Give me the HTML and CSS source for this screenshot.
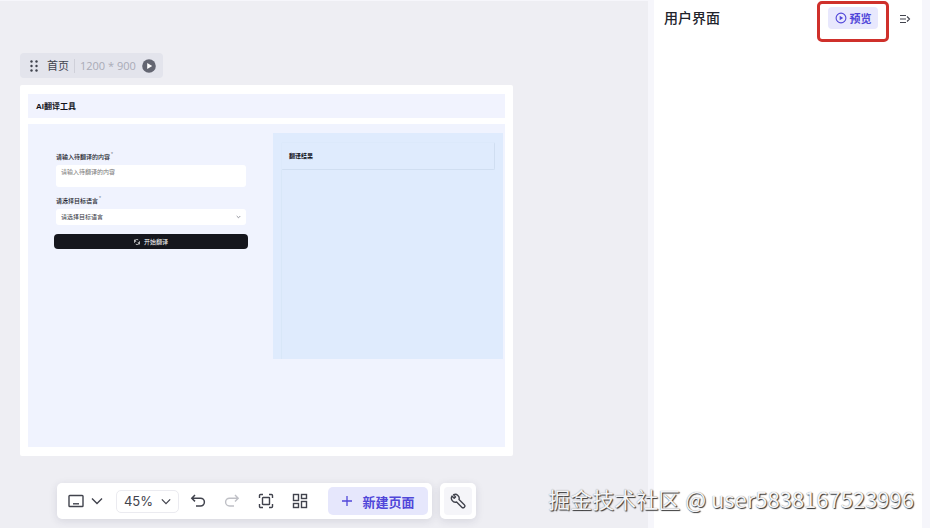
FILE: index.html
```html
<!DOCTYPE html>
<html lang="zh-CN">
<head>
    <meta charset="UTF-8">
    <meta name="viewport" content="width=device-width, initial-scale=1.0">
    <title>用户界面</title>
    <link rel="stylesheet" href="styles.css">
</head>
<body>
    <main class="canvas">
        <div class="page-tag">
            <svg class="drag" width="8" height="12" viewBox="0 0 8 12" fill="#41434d">
                <circle cx="1.5" cy="1.5" r="1.2"/><circle cx="6.5" cy="1.5" r="1.2"/>
                <circle cx="1.5" cy="6" r="1.2"/><circle cx="6.5" cy="6" r="1.2"/>
                <circle cx="1.5" cy="10.5" r="1.2"/><circle cx="6.5" cy="10.5" r="1.2"/>
            </svg>
            <span class="page-name">首页</span>
            <span class="page-size">1200 * 900</span>
            <button class="play" type="button" aria-label="播放">
                <svg width="14" height="14" viewBox="0 0 14 14"><circle cx="7" cy="7" r="6.8" fill="#646672"/><path d="M5.2 3.9v6.2L10.2 7z" fill="#fff"/></svg>
            </button>
        </div>

        <section class="board">
            <h1 class="board-title">AI翻译工具</h1>
            <div class="board-body">
                <form class="translate-form">
                    <label for="content">请输入待翻译的内容<sup>*</sup></label>
                    <textarea id="content" placeholder="请输入待翻译的内容"></textarea>
                    <label for="language">请选择目标语言<sup>*</sup></label>
                    <div class="select-box">
                        <select id="language">
                            <option>请选择目标语言</option>
                        </select>
                        <svg width="5" height="4" viewBox="0 0 5 4" fill="none" stroke="#777a85" stroke-width=".8"><path d="M.7 1l1.800 1.800L4.300 1"/></svg>
                    </div>
                    <button class="submit" type="button">
                        <svg width="6" height="6" viewBox="0 0 12 12" fill="none" stroke="#fff" stroke-width="1.400"><path d="M1 7.500A5 5 0 0 1 8.500 1.700M1.500 1v3.500h3M11 4.500A5 5 0 0 1 3.500 10.300M10.500 11V7.500h-3"/></svg>
                        开始翻译
                    </button>
                </form>
                <div class="result">
                    <h2 class="result-title">翻译结果</h2>
                    <div class="result-content"></div>
                </div>
            </div>
        </section>

        <div class="toolbar">
            <div class="tools">
                <button class="tool device" type="button" aria-label="设备">
                    <svg width="16" height="14" viewBox="0 0 16 14" fill="none" stroke="#41434d" stroke-width="1.4"><rect x="1" y="1.500" width="14" height="11" rx=".8"/><path d="M5 9.800h6"/></svg>
                    <svg width="12" height="8" viewBox="0 0 12 8" fill="none" stroke="#41434d" stroke-width="1.400"><path d="M1 1.500l5 5 5-5"/></svg>
                </button>
                <button class="zoom" type="button">
                    45%
                    <svg width="10" height="7" viewBox="0 0 12 8" fill="none" stroke="#41434d" stroke-width="1.500"><path d="M1 1.500l5 5 5-5"/></svg>
                </button>
                <button class="tool" type="button" aria-label="撤销">
                    <svg width="16" height="14" viewBox="0 0 16 14" fill="none" stroke="#41434d" stroke-width="1.500"><path d="M5 1L1.800 4.200 5 7.400M2 4.200h8.500a3.900 3.900 0 0 1 0 7.800H6"/></svg>
                </button>
                <button class="tool" type="button" aria-label="重做" disabled>
                    <svg width="16" height="14" viewBox="0 0 16 14" fill="none" stroke="#bfc0c6" stroke-width="1.400"><path d="M11 1l3.200 3.200L11 7.400M14 4.200H5.500a3.900 3.900 0 0 0 0 7.800H10"/></svg>
                </button>
                <button class="tool" type="button" aria-label="适应画布">
                    <svg width="16" height="16" viewBox="0 0 16 16" fill="none" stroke="#41434d" stroke-width="1.400"><path d="M1.500 5V2.500a1 1 0 0 1 1-1H5M11 1.500h2.500a1 1 0 0 1 1 1V5M14.500 11v2.500a1 1 0 0 1-1 1H11M5 14.500H2.500a1 1 0 0 1-1-1V11"/><rect x="4.500" y="4.500" width="7" height="7" rx=".6"/></svg>
                </button>
                <button class="tool" type="button" aria-label="布局">
                    <svg width="16" height="16" viewBox="0 0 16 16" fill="none" stroke="#41434d" stroke-width="1.400"><rect x="1.500" y="1.500" width="5" height="6"/><rect x="9.500" y="1.500" width="5" height="4"/><rect x="1.500" y="10.500" width="5" height="4"/><rect x="9.500" y="8.500" width="5" height="6"/></svg>
                </button>
                <button class="new-page" type="button">
                    <svg width="12" height="12" viewBox="0 0 12 12" fill="none" stroke="#5147d9" stroke-width="1.300"><path d="M6 1v10M1 6h10"/></svg>
                    新建页面
                </button>
            </div>
            <div class="settings">
                <button type="button" aria-label="工具">
                    <svg width="16" height="16" viewBox="0 0 16 16" fill="none" stroke="#41434d" stroke-width="1.400" stroke-linejoin="round"><path d="M2 3.100l2.200 2.100 1.300-1.300L3.600 1.700A4 4 0 0 1 9 6.600l5.300 5.100a1.700 1.700 0 0 1-2.500 2.500L6.600 9A4 4 0 0 1 2 3.100z"/></svg>
                </button>
            </div>
        </div>
    </main>

    <aside class="panel">
        <header class="panel-header">
            <h2 class="panel-title">用户界面</h2>
            <div class="highlight">
                <button class="preview" type="button">
                    <svg width="12" height="12" viewBox="0 0 12 12"><circle cx="6" cy="6" r="4.900" fill="none" stroke="#5147d9" stroke-width="1.100"/><path d="M4.700 3.700v4.600L8.200 6z" fill="#5147d9"/></svg>
                    预览
                </button>
            </div>
            <button class="collapse" type="button" aria-label="收起">
                <svg width="12" height="10" viewBox="0 0 12 10" fill="none" stroke="#41434d" stroke-width="1.100"><path d="M1 1.500h6M1 5h6M1 8.500h6M8 2.500L10.500 5 8 7.500"/></svg>
            </button>
        </header>
    </aside>

    <div class="watermark">掘金技术社区 @ user5838167523996</div>
</body>
</html>
```
FILE: styles.css
```css
* {
    box-sizing: border-box;
}
body {
    margin: 0;
    min-height: 100vh;
    display: flex;
    position: relative;
    padding-right: 8px;
    background-color: #f6f6fb;
    color: #22242c;
    font-family: "Liberation Sans", "Noto Sans CJK SC", sans-serif;
}
h1, h2 {
    margin: 0;
}
button {
    display: flex;
    align-items: center;
    justify-content: center;
    margin: 0;
    padding: 0;
    border: none;
    background: none;
    color: inherit;
    font-family: inherit;
    cursor: pointer;
}
svg {
    display: block;
    flex: none;
}

/* canvas */
.canvas {
    flex: 1;
    display: flex;
    flex-direction: column;
    align-items: flex-start;
    margin-right: 6px;
    padding: 52px 20px 9px;
    background-color: #eeeef3;
    border-top: 1px solid #f6f6fb;
}
.page-tag {
    display: flex;
    align-items: center;
    height: 25px;
    padding: 0 7px 0 10px;
    margin-bottom: 7px;
    border-radius: 4px;
    background-color: #e3e4ec;
}
.page-name {
    margin-left: 9px;
    padding-right: 5px;
    border-right: 1px solid #cfd0d9;
    font-size: 11px;
    line-height: 14px;
    color: #41434d;
}
.page-size {
    margin: 0 6px 0 5px;
    font-family: "Open Sans", sans-serif;
    font-size: 11px;
    color: #a9abb7;
}
.board {
    display: flex;
    flex-direction: column;
    gap: 6px;
    width: 493px;
    aspect-ratio: 493 / 371;
    padding: 9px 8px;
    border-radius: 2px;
    background-color: #fff;
}
.board-title {
    padding: 2px 8px 0;
    background-color: #f1f3fe;
    color: #111219;
    font-size: 8px;
    line-height: 22px;
}
.board-body {
    flex: 1;
    display: grid;
    grid-template-columns: 194px 230px;
    justify-content: space-between;
    align-items: start;
    padding: 9px 2px 0 26px;
    background-color: #f0f3fe;
}
.translate-form {
    display: flex;
    flex-direction: column;
    padding-top: 20px;
    font-size: 6px;
}
.translate-form label {
    margin: 0 2px 4px;
    font-weight: 500;
    line-height: 8px;
}
.translate-form sup {
    margin-left: 1px;
    font-size: 5px;
    line-height: 0;
    color: #777986;
}
.translate-form textarea {
    height: 22px;
    margin: 0 2px 10px;
    padding: 3px 5px;
    border: none;
    border-radius: 3px;
    background-color: #fff;
    font-family: inherit;
    font-size: 6px;
    line-height: 9px;
    resize: none;
}
.translate-form textarea::placeholder {
    color: #777;
}
.select-box {
    display: flex;
    align-items: center;
    margin: 0 2px 9px;
    padding: 0 5px;
    border-radius: 3px;
    background-color: #fff;
}
.select-box select {
    flex: 1;
    height: 16px;
    padding: 0;
    border: none;
    appearance: none;
    background: none;
    color: #33353d;
    font-family: inherit;
    font-size: 6px;
}
.submit {
    gap: 4px;
    height: 15px;
    border-radius: 4px;
    background-color: #15161d;
    color: #fff;
    font-size: 6px;
}
.result {
    min-height: 226px;
    display: flex;
    flex-direction: column;
    padding: 9px 8px 0;
    background-color: #dfebfd;
}
.result-title {
    padding: 0 7px;
    border: 1px solid #d0def1;
    border-top-color: #dce9fb;
    border-left-color: #dce9fb;
    border-radius: 2px;
    color: #111219;
    font-size: 6px;
    line-height: 26px;
}
.result-content {
    flex: 1;
    border-left: 1px solid #d8e7f8;
}

/* bottom toolbar */
.toolbar {
    display: flex;
    gap: 8px;
    margin: auto 0 0 37px;
}
.tools, .settings {
    display: flex;
    align-items: center;
    height: 36px;
    padding: 4px;
    border-radius: 5px;
    background-color: #fff;
    box-shadow: 0 2px 8px rgba(40, 40, 70, 0.12);
}
.tool {
    width: 34px;
    height: 28px;
}
.device {
    gap: 7px;
    width: 48px;
    margin-right: 7px;
}
.zoom {
    gap: 8px;
    width: 63px;
    height: 23px;
    margin-right: 2px;
    border: 1px solid #ebebf0;
    border-radius: 5px;
    color: #41434d;
    font-family: Inter, sans-serif;
    font-size: 13px;
}
.new-page {
    gap: 9px;
    width: 100px;
    height: 28px;
    margin-left: 11px;
    border-radius: 5px;
    background-color: #e6e7fc;
    color: #5147d9;
    font-size: 13px;
    font-weight: 600;
}
.settings button {
    width: 28px;
    height: 28px;
    border-radius: 4px;
    background-color: #f5f5f9;
}

/* right panel */
.panel {
    width: 268px;
    background-color: #fff;
}
.panel-header {
    display: flex;
    align-items: flex-start;
    padding: 1px 11px 0 10px;
}
.panel-title {
    flex: 1;
    font-size: 14px;
    font-weight: 500;
    line-height: 34px;
}
.highlight {
    height: 41px;
    margin-right: 10px;
    padding: 3px 8px;
    border: 3px solid #cf302b;
    border-radius: 5px;
}
.preview {
    gap: 3px;
    width: 50px;
    height: 22px;
    border-radius: 4px;
    background-color: #e8e8fd;
    color: #5147d9;
    font-size: 11px;
    font-weight: 600;
}
.collapse {
    height: 36px;
}

.watermark {
    position: absolute;
    right: 16px;
    bottom: 14px;
    color: #f4f4f6;
    font-family: "Noto Sans CJK SC", sans-serif;
    font-size: 22px;
    line-height: 32px;
    white-space: nowrap;
    text-shadow: 1px 1px 1px #333, 0 0 1px #888;
}
```
